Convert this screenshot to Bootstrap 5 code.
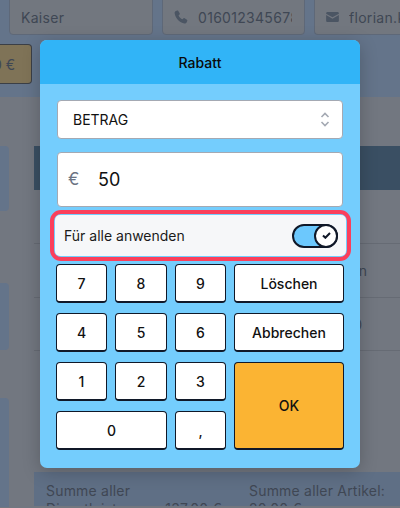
<!DOCTYPE html>
<html lang="de"><head><meta charset="utf-8">
<link href="https://cdn.jsdelivr.net/npm/bootstrap@5.3.0/dist/css/bootstrap.min.css" rel="stylesheet">
<style>
html,body{height:508px;overflow:hidden;}
body{font-family:Inter,"Liberation Sans",sans-serif;background:#727780;color:#111;position:relative;width:400px;}
.topband{height:98px;background:#64748a;padding:0 0 0 9px;}
.fieldrow{display:flex;gap:9px;height:36px;margin-top:-1px;}
.bgfield{background:#72777f;border:1px solid #5e6878;border-radius:0 0 4px 4px;height:36px;color:#3f4754;font-size:14px;display:flex;align-items:center;padding:0 12px 0 11px;gap:10px;overflow:hidden;white-space:nowrap;letter-spacing:.3px;}
.bgfield svg{flex:none;}
.bgfield span{flex:1;min-width:0;overflow:hidden;}
.bgf1{width:144px;}.bgf2{width:143px;}.bgf3{flex:1;border-right:0;border-radius:0 0 0 4px;padding-right:0;}
.goldbtn{width:32px;height:40px;margin:9px 0 0 -9px;background:#7f7357;border:1px solid #3b3f46;border-left:0;border-radius:0 4px 4px 0;color:#3f4754;font-size:14px;display:flex;align-items:center;justify-content:flex-end;padding-right:16px;white-space:nowrap;overflow:hidden;}
.lowarea{display:flex;height:410px;overflow:hidden;}
.sidecol{width:34px;padding-top:49px;flex:none;}
.sidecard{width:9px;background:#64748a;border-radius:0 4px 4px 0;}
.sc1{height:65px;}.sc2{height:67px;margin-top:72px;}.sc3{height:120px;margin-top:48px;}
.maincol{flex:1;min-width:0;padding-top:49px;}
.thead-bar{height:44px;background:#3a4f63;}
.trow{border-bottom:1px solid #666b74;color:#3f4754;font-size:14px;display:flex;justify-content:flex-end;align-items:center;}
.tr1{height:54px;}.tr2{height:54px;padding-right:33px;}.tr3{height:53px;padding-right:38px;}
.tblfill{height:121px;}
.sumbar{height:34px;background:#5f6f85;color:#3f4754;font-size:14px;padding:10px 0 0 12px;display:flex;line-height:18px;overflow:hidden;letter-spacing:.2px;white-space:nowrap;}
.sumleft{width:203px;}
.sumline{display:flex;justify-content:space-between;width:176px;}
.dlg{position:absolute;left:40px;top:40px;width:320px;height:428px;background:#74cdfd;border-radius:7px;overflow:hidden;box-shadow:0 4px 18px rgba(0,0,0,.22);}
.dlghead{height:44px;background:#31b4f7;display:flex;align-items:center;justify-content:center;font-size:14px;font-weight:500;color:#0a0a0a;}
.dlgbody{padding:16px;}
.selbox{height:39px;background:#fff;border:1px solid #a4a9b3;border-radius:4px;display:flex;align-items:center;justify-content:space-between;padding:0 12px 0 15px;margin:0 1px;font-size:14px;}
.amount{height:55px;background:#fff;border:1px solid #a4a9b3;border-radius:4px;display:flex;align-items:center;margin:13px 1px 0;padding-left:10px;font-size:18px;}
.amount .eur{color:#6c7483;width:30px;font-size:17px;}
.applyring{margin:3px -6px;height:51px;border:4px solid #fb3f5b;border-radius:11px;padding:1px;background:#74cdfd;width:301px;}
.applyin{height:100%;background:#f6f7f9;border-radius:5px;display:flex;align-items:center;justify-content:space-between;padding:0 8px 0 9px;font-size:14px;color:#1a1a1a;}
.sw{width:46px;height:24px;border:2px solid #101828;border-radius:12px;background:#6cc8fd;position:relative;}
.sw i{position:absolute;right:-2px;top:-2px;width:24px;height:24px;border:2px solid #101828;border-radius:50%;background:#fff;display:flex;align-items:center;justify-content:center;}
.padgrid{display:grid;grid-template-columns:51px 52px 51px 110px;grid-template-rows:repeat(4,39px);gap:10px 8px;margin:0;}
.pbtn{background:#fff;border:1px solid #101828;border-bottom-width:2px;border-radius:4px;padding:0;font-size:14px;font-weight:500;color:#111;display:flex;align-items:center;justify-content:center;}
.pokay{grid-row:3 / span 2;grid-column:4;background:#fbb433;}
.pzero{grid-column:1 / span 2;}
</style></head><body>
<div class="topband">
 <div class="fieldrow">
  <div class="bgfield bgf1">Kaiser</div>
  <div class="bgfield bgf2"><svg width="14" height="14" viewBox="0 0 16 16"><path fill="#4b5563" d="M3.600.700 1.600 1.500C.800 2 .600 3 .800 4c.900 5.500 5.600 10.300 11.200 11.300 1 .200 1.900-.100 2.400-.900l.800-2c.200-.500 0-1-.400-1.300l-2.700-1.700c-.500-.300-1-.200-1.400.200l-1 1.100C7.800 9.900 6 8.100 5.200 6.200l1.100-1c.400-.400.500-.900.200-1.400L4.900 1.100C4.600.700 4.100.500 3.600.700Z"/></svg><span>016012345678</span></div>
  <div class="bgfield bgf3"><svg width="13" height="10" viewBox="0 0 14 11"><path fill="#4b5563" d="M1.500 0h11C13.300 0 14 .7 14 1.500v.3L7 5.800 0 1.800v-.3C0 .7.700 0 1.500 0ZM0 3.400l7 4 7-4v6.100c0 .8-.7 1.500-1.500 1.500h-11C.7 11 0 10.300 0 9.500Z"/></svg><span>florian.kaiser</span></div>
 </div>
 <div class="goldbtn">0 €</div>
</div>
<div class="lowarea">
 <div class="sidecol">
  <div class="sidecard sc1"></div>
  <div class="sidecard sc2"></div>
  <div class="sidecard sc3"></div>
 </div>
 <div class="maincol">
  <div class="thead-bar"></div>
  <div class="trow tr1"></div>
  <div class="trow tr2">n</div>
  <div class="trow tr3">0</div>
  <div class="tblfill"></div>
  <div class="sumbar"><div class="sumleft">Summe aller<div class="sumline"><span>Dienstleistungen:</span><span>137,00 €</span></div></div><div>Summe aller Artikel:<br>20,00 €</div></div>
 </div>
</div>

<div class="dlg">
 <div class="dlghead">Rabatt</div>
 <div class="dlgbody">
  <div class="selbox"><span>BETRAG</span><svg width="10" height="15" viewBox="0 0 10 15" fill="none" stroke="#a4a9b3" stroke-width="1.600"><path d="M1.500 5 5 1.500 8.500 5M1.500 10 5 13.500 8.500 10"/></svg></div>
  <div class="amount"><span class="eur">€</span><span>50</span></div>
  <div class="applyring"><div class="applyin"><span>Für alle anwenden</span><span class="sw"><i><svg width="9" height="7" viewBox="0 0 10 8" fill="none" stroke="#101828" stroke-width="2.300"><path d="M1 4l2.700 2.600L9 1.200"/></svg></i></span></div></div>
  <div class="padgrid">
   <button class="pbtn">7</button><button class="pbtn">8</button><button class="pbtn">9</button><button class="pbtn">Löschen</button>
   <button class="pbtn">4</button><button class="pbtn">5</button><button class="pbtn">6</button><button class="pbtn">Abbrechen</button>
   <button class="pbtn">1</button><button class="pbtn">2</button><button class="pbtn">3</button><button class="pbtn pokay">OK</button>
   <button class="pbtn pzero">0</button><button class="pbtn">,</button>
  </div>
 </div>
</div>
<script src="https://cdn.jsdelivr.net/npm/bootstrap@5.3.0/dist/js/bootstrap.bundle.min.js"></script>
</body></html>
